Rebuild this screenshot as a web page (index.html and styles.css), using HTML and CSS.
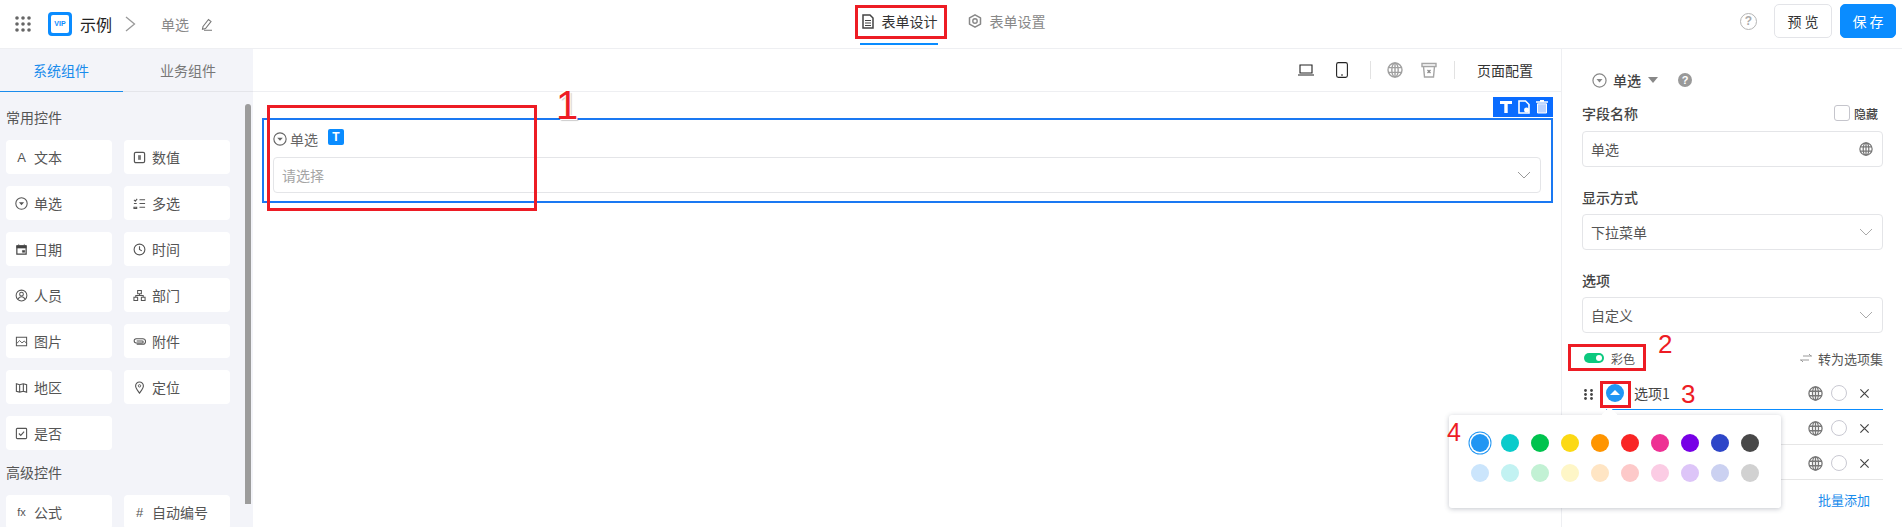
FILE: index.html
```html
<!DOCTYPE html>
<html lang="zh-CN">
<head>
    <meta charset="UTF-8">
    <title>表单设计</title>
    <link rel="stylesheet" href="styles.css">
</head>
<body>
    <svg class="defs" width="0" height="0">
        <symbol id="i-drop" viewBox="0 0 16 16"><circle cx="8" cy="8" r="7" fill="none" stroke="currentColor" stroke-width="1.300"/><path d="M4.800 6.500h6.400L8 10z" fill="currentColor"/></symbol>
        <symbol id="i-globe" viewBox="0 0 16 16"><g fill="none" stroke="currentColor" stroke-width="1.400"><circle cx="8" cy="8" r="7"/><ellipse cx="8" cy="8" rx="3.200" ry="7"/><path d="M1.400 5.600h13.200M1.400 10.400h13.200M8 1v14"/></g></symbol>
        <symbol id="i-chev" viewBox="0 0 14 8"><path d="M1 1l6 6 6-6" fill="none" stroke="currentColor" stroke-width="1"/></symbol>
        <symbol id="i-x" viewBox="0 0 12 12"><path d="M1.500 1.500l9 9M10.500 1.500l-9 9" fill="none" stroke="currentColor" stroke-width="1.300"/></symbol>
    </svg>

    <header class="topbar">
        <div class="top-left">
            <svg class="apps" width="16" height="16" viewBox="0 0 16 16" fill="#666"><circle cx="2" cy="2" r="1.800"/><circle cx="8" cy="2" r="1.800"/><circle cx="14" cy="2" r="1.800"/><circle cx="2" cy="8" r="1.800"/><circle cx="8" cy="8" r="1.800"/><circle cx="14" cy="8" r="1.800"/><circle cx="2" cy="14" r="1.800"/><circle cx="8" cy="14" r="1.800"/><circle cx="14" cy="14" r="1.800"/></svg>
            <div class="logo"><span>VIP</span></div>
            <span class="app-name">示例</span>
            <svg class="crumb-arrow" width="11" height="16" viewBox="0 0 11 16"><path d="M1 1l8.500 7L1 15" fill="none" stroke="#999" stroke-width="1.300"/></svg>
            <span class="crumb">单选</span>
            <svg width="13" height="13" viewBox="0 0 13 13"><path d="M3 8.500L8.500 1.500l2.500 2-5.500 7-3 .8zM4 12.300h8" fill="none" stroke="#777" stroke-width="1.100"/></svg>
        </div>
        <nav class="top-tabs">
            <a class="top-tab active">
                <svg width="12" height="15" viewBox="0 0 12 15"><path d="M1 1h7l3 3v10H1z" fill="none" stroke="#444" stroke-width="1.500"/><path d="M3 6.500h6M3 9h6M3 11.500h6" stroke="#444" stroke-width="1.200"/></svg>
                表单设计
            </a>
            <a class="top-tab">
                <svg width="14" height="14" viewBox="0 0 14 14"><path d="M7 .8l5.500 3.100v6.200L7 13.200l-5.500-3.100V3.900z" fill="none" stroke="#888" stroke-width="1.500" stroke-linejoin="round"/><circle cx="7" cy="7" r="2.200" fill="none" stroke="#888" stroke-width="1.400"/></svg>
                表单设置
            </a>
        </nav>
        <div class="top-right">
            <div class="help">?</div>
            <button class="btn">预 览</button>
            <button class="btn btn-primary">保 存</button>
        </div>
    </header>

    <div class="main">
        <aside class="sidebar">
            <div class="side-tabs">
                <div class="side-tab active">系统组件</div>
                <div class="side-tab">业务组件</div>
            </div>
            <div class="side-body">
                <div class="group-title">常用控件</div>
                <div class="widget-grid">
                    <div class="widget"><span class="w-icon w-letter">A</span>文本</div>
                    <div class="widget"><svg class="w-icon" viewBox="0 0 14 14"><rect x="1.500" y="1.500" width="11" height="11" rx="1.500" fill="none" stroke="#555" stroke-width="1.300"/><path d="M5.500 4.500h3v5h-3z" fill="#777"/></svg>数值</div>
                    <div class="widget"><svg class="w-icon"><use href="#i-drop"/></svg>单选</div>
                    <div class="widget"><svg class="w-icon" viewBox="0 0 14 14"><path d="M1 3l1.500 1.500L4.500 2M7 3h6M1 7h3M7 7h6M1 11h3v1.500H1zM7 11h6" fill="none" stroke="#555" stroke-width="1.100"/></svg>多选</div>
                    <div class="widget"><svg class="w-icon" viewBox="0 0 14 14"><path d="M2 3h10v9H2z" fill="none" stroke="#444" stroke-width="1.300"/><path d="M2 3h10v2.500H2zM4 1v2M10 1v2M8 8h2.500v2H8z" fill="#444" stroke="#444" stroke-width=".6"/></svg>日期</div>
                    <div class="widget"><svg class="w-icon" viewBox="0 0 14 14"><circle cx="7" cy="7" r="5.800" fill="none" stroke="#555" stroke-width="1.200"/><path d="M7 3.500V7l2.500 1.500" fill="none" stroke="#555" stroke-width="1.200"/></svg>时间</div>
                    <div class="widget"><svg class="w-icon" viewBox="0 0 14 14"><circle cx="7" cy="7" r="5.800" fill="none" stroke="#555" stroke-width="1.100"/><circle cx="7" cy="5.600" r="2" fill="none" stroke="#555" stroke-width="1.100"/><path d="M3.500 11c.6-2 2-2.600 3.500-2.600s2.900.6 3.500 2.600" fill="none" stroke="#555" stroke-width="1.100"/></svg>人员</div>
                    <div class="widget"><svg class="w-icon" viewBox="0 0 14 14"><path d="M5 1.500h4v3.500H5zM1 9h4v3.500H1zM9 9h4v3.500H9zM7 5v2M3 9V7h8v2" fill="none" stroke="#555" stroke-width="1.100"/></svg>部门</div>
                    <div class="widget"><svg class="w-icon" viewBox="0 0 14 14"><path d="M1.500 2.500h11v9h-11z" fill="none" stroke="#555" stroke-width="1.100"/><path d="M2 9l3-3 2.500 2.500L10 6.500l2.500 2.500" fill="none" stroke="#555" stroke-width="1"/></svg>图片</div>
                    <div class="widget"><svg class="w-icon" viewBox="0 0 14 14"><path d="M4 10h6.500a2.500 2.500 0 000-6H3.500a2 2 0 000 4.500H10a1 1 0 000-2H4" fill="none" stroke="#555" stroke-width="1.100"/></svg>附件</div>
                    <div class="widget"><svg class="w-icon" viewBox="0 0 14 14"><path d="M1.500 3l3.500 1 4-1 3.500 1v8l-3.500-1-4 1-3.500-1zM5 4v8M9 3v8" fill="none" stroke="#555" stroke-width="1.200"/></svg>地区</div>
                    <div class="widget"><svg class="w-icon" viewBox="0 0 14 14"><path d="M7 13C4.500 9.500 2.800 7.500 2.800 5.300a4.200 4.200 0 018.400 0C11.200 7.500 9.500 9.500 7 13z" fill="none" stroke="#555" stroke-width="1.200"/><circle cx="7" cy="5.200" r="1.300" fill="none" stroke="#555"/></svg>定位</div>
                    <div class="widget"><svg class="w-icon" viewBox="0 0 14 14"><rect x="1.500" y="1.500" width="11" height="11" rx="1" fill="none" stroke="#555" stroke-width="1.200"/><path d="M4.200 7l2 2 3.600-4" fill="none" stroke="#555" stroke-width="1.200"/></svg>是否</div>
                </div>
                <div class="group-title group-second">高级控件</div>
                <div class="widget-grid">
                    <div class="widget"><span class="w-icon w-letter w-small">fx</span>公式</div>
                    <div class="widget"><span class="w-icon w-letter">#</span>自动编号</div>
                </div>
                <div class="scroll-thumb"></div>
            </div>
        </aside>

        <section class="canvas">
            <div class="canvas-tools">
                <svg width="16" height="12" viewBox="0 0 16 12"><path d="M2 1h12v8H2zM0 11h16" fill="none" stroke="#222" stroke-width="1.100"/></svg>
                <svg class="tool-phone" width="12" height="16" viewBox="0 0 12 16"><rect x=".6" y=".6" width="10.800" height="14.800" rx="1.800" fill="none" stroke="#222" stroke-width="1.100"/><path d="M5 13h2" stroke="#222"/></svg>
                <span class="tool-sep"></span>
                <svg width="16" height="16" class="tool-grey"><use href="#i-globe"/></svg>
                <svg class="tool-bin" width="16" height="16" viewBox="0 0 16 16"><path d="M1 1.500h14v3H1zM2.500 4.500l1 10.500h9l1-10.500" fill="none" stroke="#a5a5a5" stroke-width="1.400"/><path d="M6.500 8l3 3M9.500 8l-3 3" fill="none" stroke="#888" stroke-width="1.200"/></svg>
                <span class="tool-sep tool-sep2"></span>
                <span class="tool-text">页面配置</span>
            </div>
            <div class="canvas-body">
                <div class="field-actions">
                    <svg width="14" height="14" viewBox="0 0 14 14"><path d="M1 1h12v3H8.700v9H5.300V4H1z" fill="#fff"/></svg>
                    <svg width="12" height="14" viewBox="0 0 12 14"><path d="M1 1h6.500L11 4.500V13H1z" fill="none" stroke="#fff" stroke-width="1.600"/><circle cx="8.500" cy="10" r="2.500" fill="#fff"/></svg>
                    <svg width="12" height="14" viewBox="0 0 12 14"><path d="M0 2h12M4 .7h4" stroke="#fff" stroke-width="1.300"/><path d="M1.500 3.800h9V13h-9z" fill="#b9d2ff" stroke="#fff"/></svg>
                </div>
                <div class="field-box">
                    <div class="field-label">
                        <svg width="14" height="14"><use href="#i-drop"/></svg>
                        <span>单选</span>
                        <span class="t-badge">T</span>
                    </div>
                    <div class="select-box">
                        <span class="placeholder">请选择</span>
                        <svg width="14" height="8"><use href="#i-chev"/></svg>
                    </div>
                </div>
            </div>
        </section>

        <aside class="panel">
            <div class="panel-head">
                <svg width="15" height="15" class="head-drop"><use href="#i-drop"/></svg>
                <span class="head-name">单选</span>
                <span class="head-caret"></span>
                <span class="head-help">?</span>
            </div>
            <div class="panel-row row-first">
                <span class="panel-label">字段名称</span>
                <label class="hide-check"><span class="check"></span>隐藏</label>
            </div>
            <div class="select-box panel-input">
                <span>单选</span>
                <svg width="14" height="14" class="globe"><use href="#i-globe"/></svg>
            </div>
            <div class="panel-label label-gap">显示方式</div>
            <div class="select-box panel-input">
                <span>下拉菜单</span>
                <svg width="14" height="8" class="chev"><use href="#i-chev"/></svg>
            </div>
            <div class="panel-label label-gap">选项</div>
            <div class="select-box panel-input">
                <span>自定义</span>
                <svg width="14" height="8" class="chev"><use href="#i-chev"/></svg>
            </div>
            <div class="panel-row row-color">
                <div class="color-toggle"><span class="toggle"></span>彩色</div>
                <div class="convert">
                    <svg width="12" height="10" viewBox="0 0 12 10"><path d="M3 3h9M9 1l2 2M9 7H0M3 9L1 7" fill="none" stroke="#999" stroke-width="1"/></svg>
                    转为选项集
                </div>
            </div>
            <div class="option-row option-active">
                <svg class="drag" width="9" height="11" viewBox="0 0 9 11" fill="#444"><circle cx="1.500" cy="1.500" r="1.400"/><circle cx="7.500" cy="1.500" r="1.400"/><circle cx="1.500" cy="5.500" r="1.400"/><circle cx="7.500" cy="5.500" r="1.400"/><circle cx="1.500" cy="9.500" r="1.400"/><circle cx="7.500" cy="9.500" r="1.400"/></svg>
                <span class="color-dot"></span>
                <span class="option-name">选项1</span>
                <svg width="15" height="15" class="globe"><use href="#i-globe"/></svg>
                <span class="radio"></span>
                <svg width="11" height="11" class="del"><use href="#i-x"/></svg>
            </div>
            <div class="option-row">
                <span class="option-name"></span>
                <svg width="15" height="15" class="globe"><use href="#i-globe"/></svg>
                <span class="radio"></span>
                <svg width="11" height="11" class="del"><use href="#i-x"/></svg>
            </div>
            <div class="option-row">
                <span class="option-name"></span>
                <svg width="15" height="15" class="globe"><use href="#i-globe"/></svg>
                <span class="radio"></span>
                <svg width="11" height="11" class="del"><use href="#i-x"/></svg>
            </div>
            <div class="batch-add">批量添加</div>
        </aside>
    </div>

    <!-- colour picker popup -->
    <div class="color-pop">
        <div class="swatches">
            <span class="swatch selected" style="background:#2196f3"></span>
            <span class="swatch" style="background:#0acbcb"></span>
            <span class="swatch" style="background:#00c34e"></span>
            <span class="swatch" style="background:#fcd914"></span>
            <span class="swatch" style="background:#ff9500"></span>
            <span class="swatch" style="background:#f92525"></span>
            <span class="swatch" style="background:#ee3194"></span>
            <span class="swatch" style="background:#7700e6"></span>
            <span class="swatch" style="background:#2e46c8"></span>
            <span class="swatch" style="background:#484848"></span>
            <span class="swatch" style="background:#cbe5fc"></span>
            <span class="swatch" style="background:#c2f2f2"></span>
            <span class="swatch" style="background:#c2f1d4"></span>
            <span class="swatch" style="background:#fef6c7"></span>
            <span class="swatch" style="background:#ffe5c4"></span>
            <span class="swatch" style="background:#fdc9c9"></span>
            <span class="swatch" style="background:#fbcce4"></span>
            <span class="swatch" style="background:#ddc5f8"></span>
            <span class="swatch" style="background:#cbd1f1"></span>
            <span class="swatch" style="background:#d1d1d1"></span>
        </div>
    </div>

    <!-- red annotations on top of the screenshot -->
    <div class="mark mark-tab"></div>
    <div class="mark mark-field"></div>
    <div class="mark mark-color"></div>
    <div class="mark mark-dot"></div>
    <span class="num num1">1</span>
    <span class="num num2">2</span>
    <span class="num num3">3</span>
    <span class="num num4">4</span>
</body>
</html>
```

FILE: styles.css
```css
* {
    box-sizing: border-box;
}
html, body {
    height: 100%;
}
body {
    margin: 0;
    height: 527px;
    overflow: hidden;
    position: relative;
    font-family: "Noto Sans CJK SC", "Noto Sans", sans-serif;
    font-size: 14px;
    color: #444;
    background: #fff;
    display: flex;
    flex-direction: column;
}
.defs {
    position: absolute;
}

/* top bar */
.topbar {
    height: 49px;
    flex: none;
    border-bottom: 1px solid #eeeff2;
    display: grid;
    grid-template-columns: 1fr auto 1fr;
    align-items: center;
}
.top-left {
    display: flex;
    align-items: center;
    padding-left: 15px;
}
.logo {
    width: 24px;
    height: 24px;
    margin-left: 17px;
    border-radius: 4px;
    background: #0a8cff;
    display: flex;
    align-items: center;
    justify-content: center;
}
.logo span {
    width: 18px;
    height: 18px;
    background: #fff;
    border-radius: 2px;
    color: #0a8cff;
    font: bold 7px/18px "Liberation Sans", sans-serif;
    text-align: center;
}
.app-name {
    margin-left: 8px;
    font-size: 16px;
    color: #222;
}
.crumb-arrow {
    margin-left: 13px;
}
.crumb {
    margin: 0 11px 0 25px;
    color: #888;
}
.top-tabs {
    display: flex;
    gap: 28px;
    height: 48px;
    margin-left: 3px;
}
.top-tab {
    display: flex;
    align-items: center;
    gap: 8px;
    padding: 0 0 6px 2px;
    color: #888;
    position: relative;
}
.top-tab.active {
    color: #333;
}
.top-tab.active::after {
    content: "";
    position: absolute;
    left: 0;
    right: 0;
    top: 43px;
    height: 2px;
    background: #0a8cff;
}
.top-right {
    display: flex;
    align-items: center;
    justify-content: flex-end;
    padding-right: 6px;
    margin-top: -6px;
}
.help {
    width: 17px;
    height: 17px;
    border: 1.500px solid #b5b5b5;
    border-radius: 50%;
    color: #aaa;
    font: bold 12px/14px "Liberation Sans", sans-serif;
    text-align: center;
    margin-right: 17px;
}
.btn {
    width: 58px;
    height: 34px;
    border: 1px solid #e3e4e8;
    border-radius: 5px;
    background: #fff;
    color: #333;
    font: 14px "Noto Sans CJK SC", sans-serif;
    padding: 0;
}
.btn-primary {
    width: 56px;
    margin-left: 8px;
    border-color: #0a8cff;
    background: #0a8cff;
    color: #fff;
}

.main {
    flex: 1;
    display: flex;
    min-height: 0;
}

/* left column */
.sidebar {
    width: 253px;
    flex: none;
    background: #f3f4f9;
}
.side-tabs {
    display: flex;
    height: 43px;
    border-bottom: 1px solid #e4e5ea;
}
.side-tab {
    flex: 1;
    text-align: center;
    line-height: 42px;
    color: #777;
}
.side-tab.active {
    flex: none;
    width: 123px;
    padding-right: 1px;
    color: #1a8cec;
    height: 43px;
    border-bottom: 1px solid #1a8cec;
}
.side-body {
    position: relative;
    padding: 15px 0 0 6px;
}
.group-title {
    height: 20px;
    line-height: 20px;
    margin-bottom: 13px;
    color: #555;
}
.group-second {
    margin: 12px 0 13px;
}
.widget-grid {
    display: grid;
    grid-template-columns: 106px 106px;
    grid-auto-rows: 34px;
    column-gap: 12px;
    row-gap: 12px;
}
.widget {
    background: #fff;
    border-radius: 4px;
    display: flex;
    align-items: center;
    padding-left: 9px;
    gap: 6px;
    color: #555;
}
.w-icon {
    width: 13px;
    height: 13px;
    flex: none;
    color: #555;
}
.w-letter {
    font: 13px/13px "Liberation Sans", sans-serif;
    text-align: center;
}
.w-small {
    font-size: 11px;
}
.scroll-thumb {
    position: absolute;
    left: 245px;
    top: 12px;
    width: 6px;
    height: 400px;
    border-radius: 3px 3px 0 0;
    background: #9c9c9c;
}

/* canvas */
.canvas {
    flex: 1;
    display: flex;
    flex-direction: column;
    min-width: 0;
}
.canvas-tools {
    height: 43px;
    flex: none;
    border-bottom: 1px solid #eeeff2;
    display: flex;
    align-items: center;
    justify-content: flex-end;
    padding-right: 28px;
}
.tool-phone {
    margin-left: 22px;
}
.tool-sep {
    width: 1px;
    height: 18px;
    background: #e2e2e2;
    margin: 0 16px 0 22px;
}
.tool-sep2 {
    margin: 0 22px 0 17px;
}
.tool-grey {
    color: #a0a0a0;
}
.tool-bin {
    margin-left: 18px;
}
.tool-text {
    color: #333;
}
.canvas-body {
    padding: 5px 8px 0 9px;
}
.field-actions {
    width: 60px;
    height: 20px;
    margin-left: auto;
    background: #0a6cff;
    display: flex;
    align-items: center;
    justify-content: space-evenly;
}
.field-box {
    height: 85px;
    margin-top: 1px;
    border: 2px solid #1a78f2;
    padding: 6px 10px 0 9px;
}
.field-label {
    height: 26px;
    display: flex;
    align-items: center;
    gap: 3px;
    color: #666;
}
.t-badge {
    width: 16px;
    height: 16px;
    margin: -5px 0 0 7px;
    border-radius: 2px;
    background: #0a8cff;
    color: #fff;
    font: bold 12px/16px "Liberation Sans", sans-serif;
    text-align: center;
}
.select-box {
    height: 36px;
    border: 1px solid #e4e5e8;
    border-radius: 4px;
    display: flex;
    align-items: center;
    justify-content: space-between;
    padding: 0 9px 0 8px;
    color: #999;
}
.field-box .select-box {
    margin-top: 5px;
}
.placeholder {
    color: #a5a5a5;
}

/* right column */
.panel {
    width: 341px;
    flex: none;
    border-left: 1px solid #eeeff2;
    padding: 0 19px 0 20px;
    position: relative;
}
.panel-head {
    height: 30px;
    margin-top: 16px;
    padding-left: 10px;
    display: flex;
    align-items: center;
    gap: 6px;
}
.head-drop {
    color: #888;
}
.head-name {
    color: #444;
    font-weight: 500;
}
.head-caret {
    border: 5px solid transparent;
    border-top: 6px solid #888;
    border-bottom: 0;
    margin-left: 1px;
}
.head-help {
    width: 14px;
    height: 14px;
    margin-left: 14px;
    border-radius: 50%;
    background: #999;
    color: #fff;
    font: bold 11px/14px "Liberation Sans", sans-serif;
    text-align: center;
}
.panel-row {
    display: flex;
    align-items: center;
    justify-content: space-between;
}
.row-first {
    height: 20px;
    margin: 8px 5px 8px 0;
}
.panel-label {
    color: #444;
    font-weight: 500;
    line-height: 20px;
}
.label-gap {
    margin: 20px 0 7px;
}
.hide-check {
    display: flex;
    align-items: center;
    gap: 4px;
    font-size: 12px;
    font-weight: 500;
    color: #444;
}
.check {
    width: 16px;
    height: 16px;
    border: 1px solid #c5c5cc;
    border-radius: 3px;
}
.panel-input {
    color: #555;
}
.globe {
    color: #777;
}
.chev {
    color: #aaa;
}
.row-color {
    height: 26px;
    margin-top: 12px;
    font-size: 13px;
}
.color-toggle {
    display: flex;
    align-items: center;
    gap: 7px;
    padding-left: 2px;
    font-size: 12px;
    color: #555;
}
.toggle {
    width: 20px;
    height: 10px;
    border-radius: 5px;
    background: #0cc87e;
    position: relative;
}
.toggle::after {
    content: "";
    position: absolute;
    right: 2px;
    top: 2px;
    width: 6px;
    height: 6px;
    border-radius: 50%;
    background: #fff;
}
.convert {
    display: flex;
    align-items: center;
    gap: 6px;
    color: #555;
}
.option-row {
    height: 35px;
    display: flex;
    align-items: center;
    border-bottom: 1px solid #e6e6e6;
    margin-left: 24px;
    position: relative;
    padding: 2px 13px 0 0;
}
.option-active {
    height: 36px;
    margin-top: 3px;
    padding-top: 3px;
    border-bottom-color: #0a8cff;
}
.drag {
    position: absolute;
    left: -22px;
    top: 15px;
}
.color-dot {
    width: 18px;
    height: 18px;
    flex: none;
    border-radius: 50%;
    background: #2196f3;
    position: relative;
}
.color-dot::after {
    content: "";
    position: absolute;
    left: 4px;
    top: 6px;
    border: 5px solid transparent;
    border-bottom: 5px solid #fff;
    border-top: 0;
}
.option-name {
    flex: 1;
    margin-left: 10px;
    color: #444;
}
.radio {
    width: 16px;
    height: 16px;
    margin-left: 8px;
    border: 1px solid #c9c9d2;
    border-radius: 50%;
}
.del {
    margin-left: 12px;
    color: #444;
}
.batch-add {
    text-align: right;
    margin: 10px 13px 0 0;
    color: #1a8cec;
    font-size: 13px;
}

/* popup */
.color-pop {
    position: absolute;
    left: 1449px;
    top: 415px;
    width: 332px;
    height: 93px;
    background: #fff;
    border-radius: 3px;
    box-shadow: 0 1px 5px rgba(60, 70, 90, 0.3);
    padding: 19px 0 0 22px;
}
.color-pop::before {
    content: "";
    position: absolute;
    left: 155px;
    top: -6px;
    width: 11px;
    height: 11px;
    background: #fff;
    transform: rotate(45deg);
}
.swatches {
    display: grid;
    grid-template-columns: repeat(10, 18px);
    grid-auto-rows: 18px;
    column-gap: 12px;
    row-gap: 12px;
}
.swatch {
    width: 18px;
    height: 18px;
    border-radius: 50%;
}
.swatch.selected {
    box-shadow: 0 0 0 1.500px #fff, 0 0 0 2.500px #2196f3;
}

/* annotations */
.mark {
    position: absolute;
    border: 3px solid #ed1c24;
}
.mark-tab {
    left: 855px;
    top: 5px;
    width: 92px;
    height: 34px;
}
.mark-field {
    left: 267px;
    top: 105px;
    width: 270px;
    height: 106px;
}
.mark-color {
    left: 1568px;
    top: 344px;
    width: 78px;
    height: 27px;
}
.mark-dot {
    left: 1600px;
    top: 381px;
    width: 31px;
    height: 27px;
}
.num {
    position: absolute;
    color: #ed1c24;
    font-family: "Liberation Sans", sans-serif;
    line-height: 1;
}
.num1 {
    left: 556px;
    top: 85px;
    font-size: 40px;
    text-shadow: 1px 1px 0 #fff, -1px -1px 0 #fff, 2px 2px 1px rgba(0, 0, 0, 0.2);
}
.num2 {
    left: 1658px;
    top: 331px;
    font-size: 26px;
}
.num3 {
    left: 1681px;
    top: 381px;
    font-size: 26px;
}
.num4 {
    left: 1447px;
    top: 420px;
    font-size: 25px;
}
```
